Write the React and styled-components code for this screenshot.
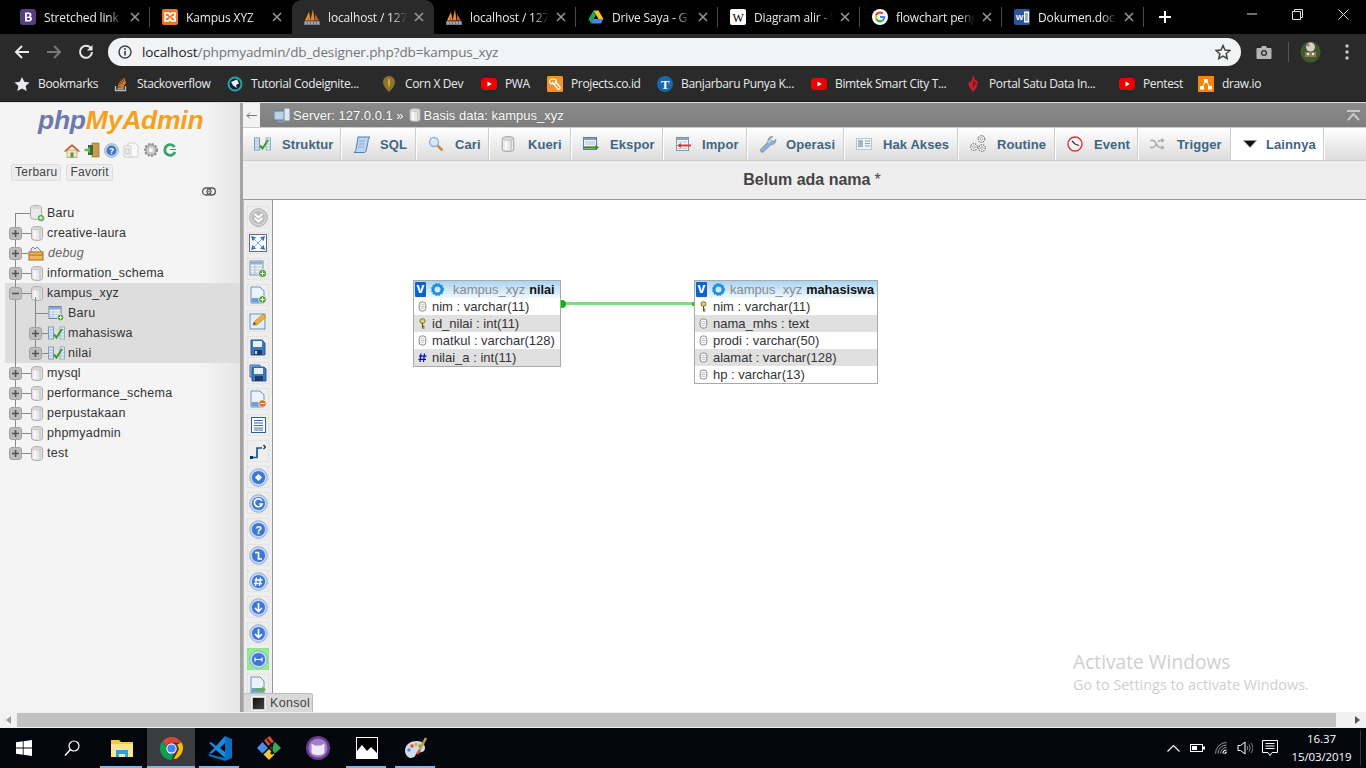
import React from 'react';
import styled, { createGlobalStyle } from 'styled-components';

const Global = createGlobalStyle`
  html, body { margin: 0; padding: 0; overflow: hidden; background: #fff; }
  * { box-sizing: border-box; }
  svg { display: block; flex: none; }
`;

const Screen = styled.div`
  width: 1366px; height: 768px; display: flex; flex-direction: column; overflow: hidden; position: relative;
  font-family: "Liberation Sans", Arial, sans-serif;
`;

/* ---------- browser chrome ---------- */
const TabStrip = styled.div`
  height: 34px; background: #000; display: flex; padding-left: 8px; flex: none;
`;
const Tab = styled.div`
  width: 142px; height: 34px; display: flex; align-items: center; padding-left: 12px; position: relative;
  color: #e8eaed; font: 12px "Open Sans", sans-serif; letter-spacing: -0.15px;
  background: ${p => (p.$active ? '#2a2a2a' : 'transparent')};
  border-radius: ${p => (p.$active ? '9px 9px 0 0' : '0')};
  ${p => (p.$sep ? `&::after { content: ""; position: absolute; right: 0; top: 7px; height: 20px; width: 1px; background: #4a4a4a; }` : '')}
`;
const TabLabel = styled.span`
  margin-left: 8px; width: 79px; white-space: nowrap;
  -webkit-mask-image: linear-gradient(to right, #000 80%, transparent 100%);
  mask-image: linear-gradient(to right, #000 80%, transparent 100%);
`;
const TabClose = styled.span`
  margin-left: 4px; width: 16px; display: flex; justify-content: center;
`;
const NewTab = styled.div`
  width: 42px; height: 34px; display: flex; align-items: center; justify-content: center;
`;
const WinControls = styled.div`
  margin-left: auto; display: flex;
`;
const WinBtn = styled.div`
  width: 45.5px; height: 28px; display: flex; align-items: center; justify-content: center;
`;
const Toolbar = styled.div`
  height: 33px; background: #2a2a2a; display: flex; align-items: center; padding: 3px 0 0 6px; flex: none;
`;
const NavBtn = styled.div`
  width: 32px; height: 28px; display: flex; align-items: center; justify-content: center;
`;
const Omnibox = styled.div`
  margin-left: 6px; width: 1133px; height: 28px; border-radius: 14px; background: #f1f3f4;
  display: flex; align-items: center; padding: 0 10px 0 10px;
`;
const UrlText = styled.div`
  margin-left: 10px; font: 13.5px "Open Sans", sans-serif; color: #70757a; white-space: nowrap; letter-spacing: -0.11px;
  b { font-weight: 400; color: #202124; }
`;
const StarWrap = styled.div`
  margin-left: auto;  margin-right: 0; display: flex;
`;
const ToolExtras = styled.div`
  display: flex; align-items: center; margin-left: 15px;
`;
const ToolSep = styled.div`
  width: 1px; height: 20px; background: #555; margin: 0 11px 0 16px;
`;
const BookmarkBar = styled.div`
  height: 35px; background: #2a2a2a; display: flex; align-items: center; padding: 0 0 1px 14px; flex: none;
  border-bottom: 1px solid #1b1b1b;
`;
const Bookmark = styled.div`
  width: ${p => p.$w}px; display: flex; align-items: center; gap: 8px; color: #e8eaed;
  font: 12px "Open Sans", sans-serif; white-space: nowrap; letter-spacing: -0.35px;
`;

/* ---------- phpMyAdmin layout ---------- */
const Page = styled.div`
  flex: none; height: 610px; display: flex; background: #fff; border-top: 1px solid #ddd;
`;
const Sidebar = styled.aside`
  width: 243px; flex: none; border-right: 3px solid #a3a3a3;
  background: linear-gradient(to right, #f4f4f4 0, #f4f4f4 205px, #e6e6e6 240px);
  display: flex; flex-direction: column;
`;
const Logo = styled.div`
  height: 35px; padding-left: 38px; display: flex; align-items: center;
  font: italic 700 26.5px "Liberation Sans", Arial, sans-serif; letter-spacing: -0.25px; color: #6d78ad;
  span { color: #f4a11d; }
`;
const NavIcons = styled.div`
  height: 22px; margin-top: 1px; padding-left: 64px; display: flex; align-items: center; gap: 4px;
`;
const SideBtns = styled.div`
  display: flex; gap: 5px; padding-left: 11px; margin-top: 3px;
`;
const SideBtn = styled.div`
  height: 17px; padding: 0 3px; border: 1px solid #ddd; border-radius: 3px; background: #eee; color: #444;
  font-size: 12px; line-height: 15px; letter-spacing: .25px;
`;
const LinkRow = styled.div`
  height: 20px; display: flex; align-items: center; padding-left: 202px;
`;
const Tree = styled.div`
  margin-top: 2px; position: relative;
  &::after { content: ""; position: absolute; left: 15px; top: 10px; bottom: 10px; width: 1px; background: #888; }
`;
const Branch = styled.div`
  position: relative;
  &::after { content: ""; position: absolute; left: 35px; top: 14px; bottom: 10px; width: 1px; background: #888; }
`;
const Row = styled.div`
  height: 20px; display: flex; align-items: center; position: relative;
  margin-left: 5px; padding-left: ${p => 4 + p.$depth * 20}px;
  background: ${p => (p.$hl ? '#dddddd' : 'transparent')};
  font-size: 12.5px; letter-spacing: .25px; color: ${p => (p.$muted ? '#666' : '#333')};
  font-style: ${p => (p.$muted ? 'italic' : 'normal')};
`;
const Expander = styled.span`
  width: 13px; height: 13px; border-radius: 3px; background: #bdbdbd; border: 1px solid #a2a2a2;
  display: flex; align-items: center; justify-content: center; position: relative; z-index: 1; flex: none;
`;
const Connector = styled.span`
  display: block; height: 1px; width: ${p => p.$w}px; background: #888; flex: none;
  margin-left: ${p => p.$ml || 0}px;
`;
const RowLabel = styled.span`
  margin-left: ${p => p.$ml}px; white-space: nowrap;
`;

const Main = styled.main`
  flex: 1; min-width: 0; display: flex; flex-direction: column;
`;
const ServerBar = styled.div`
  height: 25px; background: linear-gradient(to bottom, #8a8a8a, #7e7e7e); display: flex; align-items: center; flex: none;
  color: #fff; font-size: 13px; border-bottom: 1px solid #ccc;
`;
const BackBox = styled.div`
  width: 17px; height: 24px; background: #f3f3f3; display: flex; align-items: center; justify-content: center; flex: none;
`;
const Crumb = styled.div`
  display: flex; align-items: center; gap: 3px; margin-left: ${p => p.$ml}px; white-space: nowrap; text-shadow: 0 0 1px #555;
`;
const Collapse = styled.div`
  margin-left: auto; margin-right: 6px;
`;
const TabBar = styled.nav`
  height: 33px; display: flex; flex: none; background: linear-gradient(to bottom, #fff, #dcdcdc); border-bottom: 1px solid #ccc;
`;
const MenuTab = styled.div`
  width: ${p => p.$w}px; flex: none; display: flex; align-items: center; padding-left: 11px;
  font-weight: 700; font-size: 13px; color: #3f6584; letter-spacing: .1px;
  border-right: 1px solid #fff; box-shadow: inset -1px 0 0 #cfcfcf;
  background: ${p => (p.$on ? '#fff' : 'transparent')};
`;
const MenuLabel = styled.span`
  margin-left: ${p => p.$ml}px; white-space: nowrap;
`;
const Title = styled.div`
  height: 39px; background: #eee; border-bottom: 1px solid #999; flex: none;
  display: flex; align-items: center; justify-content: center; padding-left: 15px;
  font-size: 16px; font-weight: 700; color: #444;
  span { font-weight: 400; margin-left: 4px; }
`;
const Workspace = styled.div`
  flex: 1; min-height: 0; display: flex; position: relative; overflow: hidden;
`;
const SideTools = styled.div`
  width: 30px; flex: none; background: #eee; border-right: 1px solid #999; border-left: 1px solid #bbb;
  display: flex; flex-direction: column; align-items: center; padding-top: 6px; overflow: hidden;
`;
const ToolSlot = styled.div`
  width: 22px; height: 22px; margin-bottom: 4px; flex: none; display: flex; align-items: center; justify-content: center;
  border: 1px dotted ${p => (p.$on ? '#8fd88f' : '#dadada')};
  background: ${p => (p.$on ? '#8df08d' : 'transparent')};
`;
const Canvas = styled.div`
  flex: 1; position: relative; background: #fff;
`;
const DbTable = styled.div`
  position: absolute; left: ${p => p.$x}px; top: ${p => p.$y}px; width: ${p => p.$w}px;
  border: 1px solid #aaa; background: #fff; font-size: 13px; color: #333;
`;
const DbHead = styled.div`
  height: 17px; display: flex; align-items: center; padding-left: 1px; white-space: nowrap;
  background: linear-gradient(to bottom, #a9d5f3, #f0f8fd); color: #8a8a8a; font-size: 13px;
  b { color: #111; margin-left: 4px; font-size: 12.7px; }
`;
const VBox = styled.span`
  width: 11px; height: 15px; background: #0b62d0; color: #fff; font: 700 14px/13px "Liberation Sans", sans-serif; text-align: center; flex: none; border-radius: 1px;
`;
const HeadName = styled.span`
  margin-left: ${p => p.$ml}px;
`;
const DbRow = styled.div`
  height: 17px; display: flex; align-items: center; padding-left: 4px; white-space: nowrap; gap: 5px;
  background: ${p => (p.$alt ? '#e0e0e0' : '#fff')};
`;
const RelationLine = styled.div`
  position: absolute; left: ${p => p.$x}px; top: ${p => p.$y}px; width: ${p => p.$w}px; height: 3px; background: #7fdc7f;
`;
const RelationDot = styled.div`
  position: absolute; left: ${p => p.$x}px; top: ${p => p.$y}px; width: 7px; height: 8px; border-radius: 0 4px 4px 0; background: #0fb30f;
`;
const RelationEnd = styled.div`
  position: absolute; left: ${p => p.$x}px; top: ${p => p.$y}px; width: 2px; height: 4px; background: #35bd35;
`;
const Konsol = styled.div`
  position: absolute; left: 0; bottom: 0; height: 19px; width: 70px; background: #d9d9d9; border: 1px solid #bbb; border-bottom: none;
  border-radius: 3px 3px 0 0; display: flex; align-items: center; gap: 5px; padding-left: 8px; font-size: 12.5px; color: #444; letter-spacing: .3px;
`;
const KonsolIcon = styled.span`
  width: 13px; height: 13px; border: 1px solid #ccc; background: linear-gradient(135deg, #111, #444); outline: 1px solid #eee;
`;

/* ---------- bottom ---------- */
const HScroll = styled.div`
  height: 16px; background: #f1f1f1; display: flex; align-items: center; flex: none; padding-bottom: 1px;
`;
const ScrollArrow = styled.div`
  width: 17px; display: flex; justify-content: center;
`;
const ScrollThumb = styled.div`
  flex: 1; height: 14px; background: #c1c1c1; margin-right: 13px;
`;
const ScrollEnd = styled.div`
  width: 17px; margin-left: auto; display: flex; justify-content: center;
`;
const Taskbar = styled.footer`
  height: 40px; background: #03060c; display: flex; align-items: center; flex: none; position: relative; color: #fff;
`;
const TaskIcon = styled.div`
  width: ${p => p.$w || 49}px; height: 40px; display: flex; align-items: center; justify-content: center; flex: none; position: relative;
  background: ${p => (p.$on ? '#3a3c40' : 'transparent')};
  ${p => (p.$open ? `&::after { content: ""; position: absolute; left: ${p.$on ? 0 : 4}px; right: ${p.$on ? 0 : 5}px; bottom: 0; height: 2px; background: #76b9ed; }` : '')}
`;
const Tray = styled.div`
  margin-left: auto; display: flex; align-items: center; height: 40px; padding-right: 5px;
`;
const TrayIcon = styled.div`
  width: ${p => p.$w}px; display: flex; justify-content: center;
`;
const Clock = styled.div`
  width: 78px; text-align: center; font: 11.5px/18px "Open Sans", sans-serif;
  border-right: 1px solid #333; letter-spacing: -0.1px;
`;
const Watermark = styled.div`
  position: absolute; left: 1073px; top: 649px; color: #cfcfcf; font-family: "Open Sans", sans-serif; pointer-events: none;
`;
const WmBig = styled.div`
  font-size: 19.2px; line-height: 26px;
`;
const WmSmall = styled.div`
  font-size: 14.4px; line-height: 20px; margin-top: 0px;
`;

/* ---------- icons: browser ---------- */
const X = ({ c = '#9a9a9a' }) => (
  <svg width="10" height="10" viewBox="0 0 10 10"><path d="M1 1l8 8M9 1l-8 8" stroke={c} strokeWidth="1.5" /></svg>
);
const FavB = () => (
  <svg width="16" height="16" viewBox="0 0 16 16"><rect width="16" height="16" rx="3" fill="#563d7c" /><path d="M5 3.500h3.600c1.800 0 2.900.9 2.900 2.200 0 1-.6 1.700-1.400 1.900 1.100.2 1.900 1 1.900 2.200 0 1.600-1.200 2.700-3.200 2.700H5zM6.900 5v2.700h1.300c1 0 1.400-.5 1.400-1.400S9.100 5 8.200 5zm0 4.100V11h1.600c1 0 1.500-.4 1.500-1s-.6-1-1.600-1z" fill="#fff" /></svg>
);
const FavX = () => (
  <svg width="16" height="16" viewBox="0 0 16 16"><rect width="16" height="16" rx="2" fill="#e8762b" /><path d="M3 4h3.500l1.500 2 1.500-2H13v3l-2 1 2 1v3H9.500L8 10l-1.500 2H3V9l2-1-2-1z" fill="none" stroke="#fff" strokeWidth="1.700" /></svg>
);
const FavPma = () => (
  <svg width="16" height="16" viewBox="0 0 16 16"><path d="M1 11.500L5 3l1.500 8.500z" fill="#f29a2e" /><path d="M6.500 11.500L9 0l1.500 11.500z" fill="#ea8a1f" /><path d="M11 11.500V5l4 6.500z" fill="#c8641a" /><path d="M3.500 11.500L5 7v4.500z" fill="#a8561a" /><rect x="0" y="12" width="16" height="4" fill="#6d7084" /><path d="M1 13.300h14M1 14.800h14" stroke="#d5d6e0" strokeWidth=".7" strokeDasharray="2 1" /></svg>
);
const FavDrive = () => (
  <svg width="16" height="16" viewBox="0 0 16 16"><path d="M5.500 1.500h5l5 8.500h-5z" fill="#f7c325" /><path d="M5.500 1.500L.5 10l2.500 4.500 5-8.500z" fill="#1da462" /><path d="M3 14.500h10l2.500-4.500H5.500z" fill="#4285f4" /></svg>
);
const FavWiki = () => (
  <svg width="16" height="16" viewBox="0 0 16 16"><rect width="16" height="16" rx="2" fill="#fff" /><text x="8" y="12.500" fontSize="12" fontFamily="Liberation Serif" textAnchor="middle" fill="#000">W</text></svg>
);
const FavG = () => (
  <svg width="16" height="16" viewBox="0 0 16 16"><circle cx="8" cy="8" r="8" fill="#fff" /><path d="M13.200 8.100c0-.4 0-.8-.1-1.100H8v2.100h2.900c-.1.700-.5 1.300-1.100 1.700l1.700 1.300c1-.9 1.700-2.300 1.700-4z" fill="#4285f4" /><path d="M8 13.400c1.500 0 2.700-.5 3.500-1.300l-1.700-1.300c-.5.3-1.100.5-1.800.5-1.400 0-2.600-.9-3-2.200L3.200 10C4.100 12 5.900 13.400 8 13.400z" fill="#34a853" /><path d="M5 9.100c-.2-.7-.2-1.500 0-2.200L3.200 5.500c-.7 1.500-.7 3.200 0 4.600z" fill="#fbbc05" /><path d="M8 4.600c.8 0 1.500.3 2 .8l1.500-1.500C10.600 3 9.400 2.600 8 2.600c-2.100 0-3.900 1.300-4.800 2.900L5 6.900c.4-1.300 1.600-2.300 3-2.300z" fill="#ea4335" /></svg>
);
const FavWord = () => (
  <svg width="16" height="16" viewBox="0 0 16 16"><rect width="16" height="16" rx="2" fill="#2b579a" /><rect x="10" y="2.500" width="5" height="11" fill="#fff" /><path d="M11 5h3M11 7h3M11 9h3M11 11h3" stroke="#2b579a" /><text x="5.500" y="11" fontSize="8" fontWeight="700" fontFamily="Liberation Sans" textAnchor="middle" fill="#fff">W</text></svg>
);
const Arrow = ({ c = '#e8eaed', flip }) => (
  <svg width="16" height="16" viewBox="0 0 16 16" style={flip ? { transform: 'scaleX(-1)' } : undefined}><path d="M15 8H2M8 2L2 8l6 6" fill="none" stroke={c} strokeWidth="2" /></svg>
);
const Reload = () => (
  <svg width="16" height="16" viewBox="0 0 16 16"><path d="M13 4.500A6 6 0 1 0 14 8" fill="none" stroke="#e8eaed" strokeWidth="2" /><path d="M14.500 1v5.500H9z" fill="#e8eaed" /></svg>
);
const Info = () => (
  <svg width="14" height="14" viewBox="0 0 14 14"><circle cx="7" cy="7" r="6" fill="none" stroke="#444" strokeWidth="1.500" /><path d="M7 6v4.500" stroke="#444" strokeWidth="1.700" /><circle cx="7" cy="4" r="1" fill="#444" /></svg>
);
const StarO = () => (
  <svg width="16" height="16" viewBox="0 0 16 16"><path d="M8 1.500l2 4.500 4.800.5-3.600 3.200 1 4.800L8 12l-4.200 2.500 1-4.800L1.200 6.500 6 6z" fill="none" stroke="#444" strokeWidth="1.500" /></svg>
);
const Camera = () => (
  <svg width="16" height="14" viewBox="0 0 16 14"><path d="M1.500 3H5l1-2h4l1 2h3.500a1 1 0 0 1 1 1v9a1 1 0 0 1-1 1h-13a1 1 0 0 1-1-1V4a1 1 0 0 1 1-1z" fill="#b5b5b5" /><circle cx="8" cy="8" r="3" fill="#2a2a2a" /><circle cx="8" cy="8" r="1.700" fill="#b5b5b5" /></svg>
);
const Avatar = () => (
  <svg width="21" height="22" viewBox="0 0 21 22"><ellipse cx="10.500" cy="11" rx="10" ry="10.500" fill="#3d5a2a" /><circle cx="10.500" cy="6" r="4.500" fill="#d8d0c8" /><circle cx="8" cy="4" r="1.500" fill="#b06a70" /><path d="M5 11h11v5H5z" fill="#8c7a5c" /><circle cx="8" cy="13" r="1.200" fill="#eee" /><circle cx="13" cy="13" r="1.200" fill="#eee" /></svg>
);
const Dots = () => (
  <svg width="4" height="16" viewBox="0 0 4 16"><circle cx="2" cy="2" r="1.700" fill="#ccc" /><circle cx="2" cy="8" r="1.700" fill="#ccc" /><circle cx="2" cy="14" r="1.700" fill="#ccc" /></svg>
);
const BmStar = () => (
  <svg width="16" height="16" viewBox="0 0 16 16"><path d="M8 1l2.200 4.800 5.300.6-3.900 3.500 1.100 5.100L8 12.400 3.300 15l1.100-5.100L.5 6.400l5.300-.6z" fill="#e8eaed" /></svg>
);
const BmSo = () => (
  <svg width="16" height="16" viewBox="0 0 16 16"><path d="M2.500 10v4.500h10V10" fill="none" stroke="#bcbbbb" strokeWidth="1.300" /><path d="M4.500 12.800h6" stroke="#bcbbbb" strokeWidth="1.200" /><path d="M4.700 10.900l6 .6M5 9l5.800 1.400M5.800 7l5.200 2.700M7 5.200l4.500 3.700M8.700 3.500l3.300 4.600M10.700 2l1.800 5.300" stroke="#f48024" strokeWidth="1.100" /></svg>
);
const BmTeal = () => (
  <svg width="16" height="16" viewBox="0 0 16 16"><circle cx="8" cy="8" r="7.500" fill="#25a5a5" /><circle cx="8" cy="8" r="5.500" fill="#123" /><path d="M4 6l6-2.500 2 4-3 1.500 1 3-4-2.500z" fill="#e8f4f4" /></svg>
);
const BmCorn = () => (
  <svg width="16" height="18" viewBox="0 0 16 18"><path d="M8 17C4 13 2 10 2 7a6 6 0 0 1 12 0c0 3-2 6-6 10z" fill="#8b7330" /><path d="M8 3c-1.500 2-1.500 6 0 10 1.500-4 1.500-8 0-10z" fill="#e0a92e" /></svg>
);
const BmYt = () => (
  <svg width="16" height="16" viewBox="0 0 16 16"><rect y="2" width="16" height="12" rx="3.500" fill="#f00000" /><path d="M6.500 5.500L10.800 8l-4.300 2.500z" fill="#fff" /></svg>
);
const BmProj = () => (
  <svg width="16" height="16" viewBox="0 0 16 16"><rect width="16" height="16" rx="1.500" fill="#f0932b" /><ellipse cx="6" cy="5.500" rx="3.500" ry="2.500" fill="none" stroke="#fff" strokeWidth="1.200" /><path d="M5 6l6 7c1 1 3-1 2-2L8 5" fill="none" stroke="#fff" strokeWidth="1.200" /></svg>
);
const BmT = () => (
  <svg width="16" height="16" viewBox="0 0 16 16"><circle cx="8" cy="8" r="8" fill="#1769aa" /><text x="8" y="12.500" fontSize="12.500" fontFamily="Liberation Serif" fontWeight="700" textAnchor="middle" fill="#fff">T</text></svg>
);
const BmGem = () => (
  <svg width="16" height="18" viewBox="0 0 16 18"><path d="M8 0l2 4.500 3 2-1.500 6L8 17 4.500 12.500 3 8l3.500-2z" fill="#c4202c" /><path d="M8 5l3 3-3 5z" fill="#86101a" /></svg>
);
const BmDraw = () => (
  <svg width="16" height="16" viewBox="0 0 16 16"><rect width="16" height="16" fill="#f08705" /><path d="M8 5L4 11M8 5l4 6" stroke="#fff" /><rect x="6" y="3" width="4" height="3.500" fill="#fff" /><rect x="2" y="10" width="4" height="3.500" fill="#fff" /><rect x="10" y="10" width="4" height="3.500" fill="#fff" /></svg>
);

/* ---------- icons: phpMyAdmin ---------- */
const DbIcon = ({ w = 12, h = 15, c = '#e9e9e9' }) => (
  <svg width={w} height={h} viewBox="0 0 12 15"><path d="M.6 2.500C.6 1.300 3 .6 6 .6s5.400.7 5.400 1.900v10c0 1.200-2.400 1.900-5.400 1.900S.6 13.700.6 12.500z" fill={c} stroke="#a8a8a8" /><path d="M4 3.500v9.500" stroke="#fff" strokeWidth="1.500" /><path d="M9 3.500v9.500" stroke="#c8c8c8" strokeWidth="1.500" /><ellipse cx="6" cy="2.500" rx="5" ry="1.500" fill="#dcdcdc" stroke="#b8b8b8" strokeWidth=".6" /></svg>
);
const DbPlus = () => (
  <svg width="15" height="17" viewBox="0 0 15 17"><path d="M.6 2.500C.6 1.300 3 .6 6 .6s5.400.7 5.400 1.900v10c0 1.200-2.400 1.900-5.400 1.900S.6 13.700.6 12.500z" fill="#e9e9e9" stroke="#a8a8a8" /><ellipse cx="6" cy="2.500" rx="5" ry="1.500" fill="#d8d8d8" /><circle cx="11" cy="13" r="3.500" fill="#4f9f3c" stroke="#fff" strokeWidth=".6" /><path d="M9 13h4M11 11v4" stroke="#fff" /></svg>
);
const PlusMark = ({ minus }) => (
  <svg width="9" height="9" viewBox="0 0 9 9"><path d={minus ? 'M1 4.500h7' : 'M1 4.500h7M4.500 1v7'} stroke="#555" strokeWidth="1.600" /></svg>
);
const Grid = ({ children, w = 16, h = 16 }) => (
  <svg width={w} height={h} viewBox="0 0 16 16">
    <rect x="1" y="1.500" width="12" height="12" fill="#eef3f8" stroke="#5c87b2" />
    <rect x="1.500" y="2" width="11" height="2.500" fill="#84a9cf" />
    <path d="M2 7h10M2 9.500h10M2 12h10M5 5v8" stroke="#a9bed4" strokeWidth=".8" />
    {children}
  </svg>
);
const TableNew = () => (
  <Grid><circle cx="12.500" cy="12.500" r="3.300" fill="#4f9f3c" stroke="#fff" strokeWidth=".6" /><path d="M10.700 12.500h3.600M12.500 10.700v3.600" stroke="#fff" /></Grid>
);
const TableCheck = () => (
  <svg width="17" height="14" viewBox="0 0 17 14">
    <rect x=".5" y="1" width="5" height="12" fill="#dbe7f3" stroke="#7c9cbd" />
    <rect x="12" y="1" width="4.500" height="12" fill="#e4edf6" stroke="#93aec9" />
    <path d="M1 4h4M1 7h4M1 10h4M12.500 4h4M12.500 7h4M12.500 10h4" stroke="#8aa9c8" strokeWidth=".7" />
    <path d="M6 8.500l2.500 3L14 3" fill="none" stroke="#3f9a2e" strokeWidth="2" />
  </svg>
);
const TabSql = () => (
  <svg width="18" height="17" viewBox="0 0 18 17"><path d="M5 1h12c-1.500 1-2 3-2 5l-2 9c-.4 1.200-1 1.500-2 1.500H1c1.200-.6 1.600-1.500 2-3z" fill="#bfd5ee" stroke="#4a80ba" /><path d="M6 5h6M5.500 8h6M5 11h6" stroke="#7aa3d0" strokeWidth=".8" /></svg>
);
const TabSearch = () => (
  <svg width="16" height="16" viewBox="0 0 16 16"><path d="M9.500 9.500l5 5" stroke="#c78a4a" strokeWidth="2.500" /><circle cx="6" cy="6" r="4.500" fill="#d6e8f8" stroke="#8fb2d4" strokeWidth="1.300" /><path d="M3.500 5a3 3 0 0 1 2.500-2" stroke="#fff" fill="none" /></svg>
);
const TabExport = () => (
  <svg width="16" height="16" viewBox="0 0 16 16"><rect x=".5" y="1.500" width="13" height="12" fill="#eef3f8" stroke="#5c7f9f" /><rect x="1" y="2" width="12" height="2" fill="#7f9fbd" /><path d="M2 6h10M2 8h10" stroke="#9fb6cc" strokeWidth=".8" /><path d="M1 11.500h12" stroke="#3b8a2a" strokeWidth="2.200" /><path d="M12.500 9l3.500 2.500-3.500 2.500z" fill="#3b8a2a" /></svg>
);
const TabImport = () => (
  <svg width="16" height="16" viewBox="0 0 16 16"><rect x="1.500" y="1.500" width="12" height="13" fill="#f3f6fa" stroke="#7f97b0" /><rect x="2" y="2" width="11" height="2" fill="#8aa6c2" /><path d="M3 6h9M3 12.500h9" stroke="#a9bed4" strokeWidth=".8" /><path d="M5 9.500h11" stroke="#d83a3a" strokeWidth="2" /><path d="M6 7L2 9.500 6 12z" fill="#d83a3a" /></svg>
);
const TabWrench = () => (
  <svg width="18" height="18" viewBox="0 0 18 18"><path d="M1.500 14.500L9 6.800c-.6-2.300.8-5 3.900-5.300l.8.2-2 2.300 1.200 2 2.300.3 1.500-2c.6 3-1.500 5.600-4.700 5.400L4.300 17c-1.500 1-3.800-1-2.800-2.500z" fill="#8fb1d6" stroke="#6f7f90" strokeWidth=".7" /><path d="M9.500 7.500l4-4.500" stroke="#e4e8ee" strokeWidth="1.200" /></svg>
);
const TabCard = () => (
  <svg width="16" height="12" viewBox="0 0 16 12"><rect x=".5" y=".5" width="15" height="11" fill="#eef2f7" stroke="#b8c4d0" /><rect x="2" y="2" width="5" height="7" fill="#9dbde0" /><circle cx="4.500" cy="4.300" r="1.400" fill="#d9a173" /><path d="M2.500 9c0-2 4-2 4 0z" fill="#d9a173" /><path d="M9 3h5M9 5.500h5M9 8h5" stroke="#8fa0b0" /></svg>
);
const Gear = ({ x, y, r }) => (
  <g><circle cx={x} cy={y} r={r} fill="#fff" stroke="#777" strokeWidth="1.300" strokeDasharray="1.400 .9" /><circle cx={x} cy={y} r={r / 2.500} fill="#fff" stroke="#888" strokeWidth=".7" /></g>
);
const TabGears = () => (
  <svg width="17" height="18" viewBox="0 0 17 18"><Gear x={11.500} y={4} r={3.300} /><Gear x={4} y={12} r={3.300} /><Gear x={12} y={13} r={3.300} /></svg>
);
const TabEvent = () => (
  <svg width="16" height="16" viewBox="0 0 16 16"><circle cx="8" cy="8" r="7" fill="#f3f3f3" stroke="#d9363a" strokeWidth="1.400" /><path d="M8 8L5 5M8 8l4 1.500" stroke="#333" strokeWidth="1.300" /></svg>
);
const TabTrigger = () => (
  <svg width="15" height="12" viewBox="0 0 15 12"><path d="M0 2.500h3c3 0 4 7 7 7h2M0 9.500h3c1.500 0 2.300-1.500 3-3M8 4c.6-1 1.200-1.500 2-1.500h2" fill="none" stroke="#a6a6a6" strokeWidth="1.400" /><path d="M11.500 0l3 2.500-3 2.500zM11.500 7l3 2.500-3 2.500z" fill="#a6a6a6" /></svg>
);
const TabMore = () => (
  <svg width="14" height="8" viewBox="0 0 14 8"><path d="M.5.500h13L7 7.500z" fill="#111" stroke="#999" strokeWidth=".7" /></svg>
);
const Home = () => (
  <svg width="16" height="15" viewBox="0 0 16 15"><path d="M3 7h10v7.500H3z" fill="#efe3c8" stroke="#9a8a5a" strokeWidth=".6" /><path d="M0 8L8 1l8 7-1.500 1L8 3.500 1.500 9z" fill="#c66a28" /><rect x="6.500" y="9.500" width="3" height="5" fill="#5e9a3a" /></svg>
);
const Exit = () => (
  <svg width="16" height="16" viewBox="0 0 16 16"><rect x="8" y="1" width="7" height="14" fill="#c99b4a" stroke="#8a6a2a" strokeWidth=".6" /><path d="M4 3h5v10H4z" fill="#40643a" /><path d="M.5 8h5" stroke="#5fbf4a" strokeWidth="2.400" /><path d="M5 4.500L8.800 8 5 11.500z" fill="#5fbf4a" transform="rotate(180 5.500 8)" /></svg>
);
const Help = ({ s = 15 }) => (
  <svg width={s} height={s} viewBox="0 0 16 16"><circle cx="8" cy="8" r="7.300" fill="#c6d8ee" stroke="#8aa8cc" /><circle cx="8" cy="8" r="5.300" fill="#3f78b8" /><text x="8" y="11.300" fontSize="9" fontWeight="700" fontFamily="Liberation Sans" textAnchor="middle" fill="#fff">?</text></svg>
);
const Docs = () => (
  <svg width="16" height="16" viewBox="0 0 16 16"><path d="M5 1h7l3 3v11H5z" fill="#fafafa" stroke="#cfcfcf" /><path d="M1 4h7v11H1z" fill="#f4f4f4" stroke="#cfcfcf" /><rect x="3" y="7" width="3" height="5" fill="none" stroke="#c4c4c4" /></svg>
);
const Cog = () => (
  <svg width="16" height="16" viewBox="0 0 16 16"><circle cx="8" cy="8" r="5.800" fill="#aaa" stroke="#8c8c8c" strokeWidth="2.400" strokeDasharray="2 1.400" /><circle cx="8" cy="8" r="4.500" fill="#c8c8c8" /><circle cx="8" cy="8" r="2.200" fill="#f4f4f4" /></svg>
);
const Refresh = () => (
  <svg width="14" height="14" viewBox="0 0 14 14"><path d="M11.500 4A5.300 5.300 0 1 0 12 9" fill="none" stroke="#35a36b" strokeWidth="2.800" /><path d="M7 7h6v-1L7 6z" fill="#35a36b" /></svg>
);
const LinkIc = () => (
  <svg width="14" height="9" viewBox="0 0 14 9"><rect x=".7" y="1" width="8" height="7" rx="3.200" fill="none" stroke="#555" strokeWidth="1.300" /><rect x="5.300" y="1" width="8" height="7" rx="3.200" fill="none" stroke="#555" strokeWidth="1.300" /><path d="M4 4.500h6" stroke="#888" strokeWidth="1.500" /></svg>
);
const ServerIc = () => (
  <svg width="16" height="15" viewBox="0 0 16 15"><rect x="0" y="3" width="12" height="9" fill="#bcd0e6" stroke="#5578a0" /><rect x="10" y="0" width="6" height="13" fill="#dfe7f0" stroke="#7a8aa0" /><rect x="3" y="12.500" width="8" height="2" fill="#8a9ab0" /></svg>
);
const RowGlyph = () => (
  <svg width="9" height="11" viewBox="0 0 9 11"><rect x="1.200" y="1" width="6.600" height="9" rx="2.500" fill="#fff" stroke="#888" /><path d="M2.500 3.700h4M2.500 5.500h4M2.500 7.300h4" stroke="#aaa" strokeWidth=".7" /></svg>
);
const KeyGlyph = () => (
  <svg width="9" height="11" viewBox="0 0 9 11"><ellipse cx="4.500" cy="3" rx="2.600" ry="2.300" fill="#e8d266" stroke="#6e6a2a" strokeWidth=".9" /><path d="M4.500 5v5.500M4.500 8.300h2M4.500 10h2" stroke="#58571f" strokeWidth="1.100" /></svg>
);
const HashGlyph = () => (
  <svg width="9" height="11" viewBox="0 0 9 11"><path d="M3 1.500l-1 8.500M6.500 1.500l-1 8.500M1 4.200h7.500M.5 7.300h7.500" stroke="#0a0ac0" strokeWidth="1.200" /></svg>
);
const BlueGear = () => (
  <svg width="13" height="13" viewBox="0 0 13 13"><circle cx="6.500" cy="6.500" r="4.400" fill="none" stroke="#1f8fdb" strokeWidth="2.800" /><circle cx="6.500" cy="6.500" r="5.700" fill="none" stroke="#1f8fdb" strokeWidth="1.400" strokeDasharray="1.800 1.200" /></svg>
);

const Orb = ({ children, grey }) => (
  <svg width="19" height="19" viewBox="0 0 19 19">
    <circle cx="9.500" cy="9.500" r="8.800" fill={grey ? '#d4d4d4' : '#c4d8f0'} stroke={grey ? '#aaa' : '#8fadd8'} />
    <circle cx="9.500" cy="9.500" r="6.600" fill={grey ? '#bbb' : '#3f78d4'} />
    {children}
  </svg>
);
const W = { fill: 'none', stroke: '#fff', strokeWidth: 1.700 };
const sideTools = [
  <Orb grey><path d="M5.500 6l4 3.500 4-3.500M5.500 10l4 3.500 4-3.500" {...W} /></Orb>,
  <svg width="18" height="18" viewBox="0 0 18 18"><rect x=".5" y=".5" width="17" height="17" fill="#f8fbff" stroke="#667" /><path d="M2 2l5 1.500L3.500 7zM16 2l-1.500 5L11 3.500zM2 16l1.500-5L7 14.500zM16 16l-5-1.500 3.500-3.500z" fill="#2f6a9f" /><path d="M4 4l10 10M14 4L4 14" stroke="#8ab0d0" /></svg>,
  <svg width="18" height="18" viewBox="0 0 18 18"><rect x="1" y="1" width="13" height="14" fill="#eef3f8" stroke="#7594b4" /><rect x="1.500" y="1.500" width="12" height="3" fill="#8fb0d2" /><path d="M2 7h11M2 10h11M2 13h11M6 5v9" stroke="#a9bed4" strokeWidth=".8" /><circle cx="13.500" cy="13.500" r="4" fill="#4f9f3c" stroke="#fff" strokeWidth=".7" /><path d="M11.300 13.500h4.400M13.500 11.300v4.400" stroke="#fff" /></svg>,
  <svg width="18" height="18" viewBox="0 0 18 18"><path d="M2 1h9l4 4v12H2z" fill="#eaf3fb" stroke="#6d93bb" /><path d="M2.500 12h12v4.500h-12z" fill="#6aa1d6" /><circle cx="13.500" cy="13.500" r="3.800" fill="#4f9f3c" stroke="#fff" strokeWidth=".7" /><path d="M11.400 13.500h4.200M13.500 11.400v4.200" stroke="#fff" /></svg>,
  <svg width="18" height="18" viewBox="0 0 18 18"><rect x="1" y="2" width="15" height="15" fill="#e2eefa" stroke="#6d93bb" /><path d="M4 13l1-3 9-8 3 3-9 8z" fill="#eeb13a" stroke="#b07a20" strokeWidth=".6" /><path d="M4 13l1-3 2 2z" fill="#444" /></svg>,
  <svg width="16" height="17" viewBox="0 0 16 17"><path d="M1 1h11l3 3v12H1z" fill="#3d78bd" stroke="#2a5a94" /><rect x="3" y="2" width="9" height="6" fill="#e6eef7" /><rect x="4" y="11" width="8" height="5" fill="#1d3d66" /><rect x="5" y="12" width="2" height="3" fill="#dde" /></svg>,
  <svg width="18" height="19" viewBox="0 0 18 19"><path d="M1 1h10v12H1z" fill="#8ebae4" stroke="#3e6ea4" /><path d="M3 3h12l2 2v12H3z" fill="#3d78bd" stroke="#2a5a94" /><rect x="5" y="4" width="9" height="6" fill="#e6eef7" /><rect x="6" y="12" width="8" height="5" fill="#1d3d66" /></svg>,
  <svg width="18" height="18" viewBox="0 0 18 18"><path d="M2 1h9l4 4v12H2z" fill="#eaf3fb" stroke="#6d93bb" /><path d="M2.500 12h12v4.500h-12z" fill="#6aa1d6" /><circle cx="13.500" cy="13.500" r="3.800" fill="#df7028" stroke="#fff" strokeWidth=".7" /><path d="M11.400 13.500h4.200" stroke="#fff" /></svg>,
  <svg width="15" height="16" viewBox="0 0 15 16"><rect x=".5" y=".5" width="14" height="15" fill="#fff" stroke="#2f5f96" /><path d="M3 3.500h9M3 6h9M3 8.500h9M3 11h9M3 13h9" stroke="#3e6ea4" /></svg>,
  <svg width="16" height="15" viewBox="0 0 16 15"><path d="M1.500 13.500H7V4h5" fill="none" stroke="#2050a8" strokeWidth="1.700" /><rect y="12" width="3" height="3" fill="#102a80" /><path d="M13.500 1l2 2-2 2" fill="none" stroke="#223" strokeWidth="1.200" /></svg>,
  <Orb><path d="M9.500 6l3.500 3.500-3.500 3.500L6 9.500z" fill="#fff" /></Orb>,
  <Orb><path d="M13 7a4 4 0 1 0 .2 3h-3" {...W} /></Orb>,
  <Orb><text x="9.500" y="13.500" fontSize="11" fontWeight="700" fontFamily="Liberation Sans" textAnchor="middle" fill="#fff">?</text></Orb>,
  <Orb><path d="M6 6.500h3.500v6.500h3.500" {...W} /></Orb>,
  <Orb><path d="M7.500 5.500l-1 8.500M11.500 5.500l-1 8.500M5.500 8h8M5 11.500h8" fill="none" stroke="#fff" strokeWidth="1.300" /></Orb>,
  <Orb><path d="M9.500 5v8.500M6 10l3.500 3.500L13 10" {...W} /></Orb>,
  <Orb><path d="M9.500 5v8.500M6 10l3.500 3.500L13 10" {...W} /></Orb>,
  <Orb><path d="M5.500 9.500h8M6 7.500v4M13 7.500v4" fill="none" stroke="#fff" strokeWidth="1.200" /></Orb>,
  <svg width="18" height="18" viewBox="0 0 18 18"><path d="M2 1h9l4 4v12H2z" fill="#eaf3fb" stroke="#6d93bb" /><path d="M2.500 12h12v4.500h-12z" fill="#6aa1d6" /><path d="M6 13.500h8" stroke="#6bb04a" strokeWidth="2.500" /><path d="M13 10.500l4 3-4 3z" fill="#6bb04a" /></svg>,
];

/* ---------- icons: task bar ---------- */
const WinLogo = () => (
  <svg width="16" height="16" viewBox="0 0 16 16"><path d="M0 2.300L6.800 1.300v6.300H0zM7.600 1.200L16 0v7.600H7.600zM0 8.400h6.800v6.300L0 13.700zM7.600 8.400H16V16l-8.400-1.200z" fill="#fff" /></svg>
);
const Search = () => (
  <svg width="16" height="17" viewBox="0 0 16 17"><circle cx="10" cy="6" r="5" fill="none" stroke="#fff" strokeWidth="1.200" /><path d="M6.500 9.500L1 15.500" stroke="#fff" strokeWidth="1.500" /></svg>
);
const Explorer = () => (
  <svg width="22" height="19" viewBox="0 0 22 19"><path d="M0 1h8l2 2h12v15H0z" fill="#f2c94f" /><path d="M0 5h22v13H0z" fill="#fde58a" /><path d="M5 11h12v7h-3v-3H8v3H5z" fill="#2f9fd8" /></svg>
);
const Chrome = () => (
  <svg width="23" height="23" viewBox="0 0 24 24"><path d="M12 0a12 12 0 0 1 10.400 6H12a6 6 0 0 0-5.600 3.800L2.900 4.200A12 12 0 0 1 12 0z" fill="#db4437" /><path d="M22.400 6a12 12 0 0 1-8.300 17.800l4.400-7.800a6 6 0 0 0-.8-7.500z" fill="#fbbc05" transform="translate(0 -.5)" /><path d="M2.900 4.200l5 8.800A6 6 0 0 0 14 17.700l-2 6.300A12 12 0 0 1 2.900 4.200z" fill="#0f9d58" /><circle cx="12" cy="12" r="5.400" fill="#fff" /><circle cx="12" cy="12" r="4.300" fill="#4285f4" /></svg>
);
const VsCode = () => (
  <svg width="24" height="25" viewBox="0 0 24 25"><path d="M17 0l7 3v19l-7 3L1 20l-.5-2L17 22z" fill="#0a6fc2" /><path d="M17 0v22L8 14l-5 4-2-1 5.500-5L1 7l2-1 5 4z" fill="#1a8ae0" /><path d="M17 7l-5 5 5 4z" fill="#03060c" /></svg>
);
const GitIc = () => (
  <svg width="24" height="24" viewBox="0 0 24 24"><path d="M12 0l5 5-5 5-5-5z" fill="#d94a3d" transform="rotate(10 12 5)" /><path d="M5.500 6l5.500 6-5.500 5.500L0 12z" fill="#4e8be8" /><path d="M18 6l6 6-6 5.500L13 12z" fill="#3da55c" /><path d="M12 13l5.500 5.500L12 24l-5.500-5.500z" fill="#f2c63c" /><path d="M10 3l5 5.500v9" fill="none" stroke="#111" strokeWidth="1.300" /><circle cx="15" cy="9" r="1.600" fill="#111" /><circle cx="15" cy="17" r="1.600" fill="#111" /></svg>
);
const Kraken = () => (
  <svg width="24" height="24" viewBox="0 0 24 24"><circle cx="12" cy="12" r="12" fill="#6b3a90" /><circle cx="12" cy="12" r="9.500" fill="#a27ec4" /><path d="M5.500 7.500l3.500 2h6l3.500-2v8c0 2.500-2 3.500-6.500 3.500s-6.500-1-6.500-3.500z" fill="#efe9f5" /></svg>
);
const Photos = () => (
  <svg width="22" height="22" viewBox="0 0 22 22"><rect x=".5" y=".5" width="21" height="21" fill="#000" stroke="#fff" /><path d="M1 21V14l5-6 5 6 4-4 6 6v5z" fill="#fff" /></svg>
);
const Paint = () => (
  <svg width="24" height="22" viewBox="0 0 24 22"><path d="M1 14C1 7 7 4 13 4c5 0 8 3 8 7 0 6-7 3-9 6-1 3-3 4-6 4-3-1-5-4-5-7z" fill="#cfdce8" /><circle cx="8" cy="9" r="1.700" fill="#d94a3d" /><circle cx="12" cy="7.500" r="1.700" fill="#e8a33a" /><circle cx="5" cy="13" r="1.700" fill="#4e8be8" /><circle cx="16" cy="9" r="1.700" fill="#5bb04a" /><path d="M15 14L22 1" stroke="#c89a4a" strokeWidth="2.500" /><path d="M13 17l3-4" stroke="#d94a3d" strokeWidth="2.500" /></svg>
);
const Caret = () => (
  <svg width="13" height="7" viewBox="0 0 13 7"><path d="M.5 6.500l6-6 6 6" fill="none" stroke="#fff" strokeWidth="1.100" /></svg>
);
const Battery = () => (
  <svg width="15" height="8" viewBox="0 0 15 8"><rect x=".5" y=".5" width="12" height="7" fill="none" stroke="#fff" /><rect x="2" y="2" width="5" height="4" fill="#fff" /><rect x="13" y="2.500" width="2" height="3" fill="#fff" /></svg>
);
const Wifi = () => (
  <svg width="13" height="12" viewBox="0 0 13 12"><path d="M.5 11.500A11 11 0 0 1 11.500.5M3 11.500a8.500 8.500 0 0 1 8.500-8.500M5.500 11.500a6 6 0 0 1 6-6" fill="none" stroke="#999" /><path d="M8 11.500a3.500 3.500 0 0 1 3.500-3.500M10 12a2 2 0 0 1 2-2" fill="none" stroke="#fff" strokeWidth="1.200" /></svg>
);
const Speaker = () => (
  <svg width="16" height="14" viewBox="0 0 16 14"><path d="M1 4.500h2.500L8 1v12L3.500 9.500H1z" fill="none" stroke="#fff" /><path d="M10 5a3 3 0 0 1 0 4M12 3.500a6 6 0 0 1 0 7M14 2a8 8 0 0 1 0 10" fill="none" stroke="#888" /></svg>
);
const Notes = () => (
  <svg width="16" height="16" viewBox="0 0 16 16"><path d="M.5.500h15v12H10l-2 3-2-3H.5zM3.500 3.500h9M3.500 6h9M3.500 8.500h9" fill="none" stroke="#fff" /></svg>
);

const tabs = [
  { icon: <FavB />, t: 'Stretched link -', sep: true },
  { icon: <FavX />, t: 'Kampus XYZ' },
  { icon: <FavPma />, t: 'localhost / 127', active: true },
  { icon: <FavPma />, t: 'localhost / 127', sep: true },
  { icon: <FavDrive />, t: 'Drive Saya - G', sep: true },
  { icon: <FavWiki />, t: 'Diagram alir - V', sep: true },
  { icon: <FavG />, t: 'flowchart peng', sep: true },
  { icon: <FavWord />, t: 'Dokumen.doc', sep: true },
];
const bookmarks = [
  [99, <BmStar />, 'Bookmarks'], [114, <BmSo />, 'Stackoverflow'], [154, <BmTeal />, 'Tutorial Codeignite...'],
  [100, <BmCorn />, 'Corn X Dev'], [66, <BmYt />, 'PWA'], [110, <BmProj />, 'Projects.co.id'],
  [154, <BmT />, 'Banjarbaru Punya K...'], [154, <BmYt />, 'Bimtek Smart City T...'], [154, <BmGem />, 'Portal Satu Data In...'],
  [79, <BmYt />, 'Pentest'], [70, <BmDraw />, 'draw.io'],
];
const menu = [
  [99, <TableCheck />, 'Struktur', 11], [75, <TabSql />, 'SQL', 9], [73, <TabSearch />, 'Cari', 11],
  [82, <DbIcon w={14} h={16} />, 'Kueri', 13], [92, <TabExport />, 'Ekspor', 11], [84, <TabImport />, 'Impor', 11],
  [97, <TabWrench />, 'Operasi', 9], [114, <TabCard />, 'Hak Akses', 11], [97, <TabGears />, 'Routine', 10],
  [83, <TabEvent />, 'Event', 11], [93, <TabTrigger />, 'Trigger', 12], [93, <TabMore />, 'Lainnya', 9, true],
];
const dbs2 = ['mysql', 'performance_schema', 'perpustakaan', 'phpmyadmin', 'test'];

const Chest = () => (
  <svg width="16" height="15" viewBox="0 0 16 15"><path d="M3 7V3l2-2 2 2 2-2 2 2 2 2v2z" fill="#e8e8e8" stroke="#7a5a9a" strokeWidth=".8" /><rect x="1" y="6" width="14" height="8" fill="#f0b95c" stroke="#a06a1a" /><path d="M1 9h14" stroke="#a06a1a" /></svg>
);

const DbRowItem = ({ name, muted }) => (
  <Row $depth={0} $muted={muted}>
    <Expander><PlusMark /></Expander>
    <Connector $w={muted ? 6 : 9} />
    {muted ? <Chest /> : <DbIcon />}
    <RowLabel $ml={4}>{name}</RowLabel>
  </Row>
);
const TableRow = ({ name }) => (
  <Row $depth={1} $hl>
    <Expander><PlusMark /></Expander>
    <Connector $w={6} />
    <TableCheck />
    <RowLabel $ml={3}>{name}</RowLabel>
  </Row>
);
const FieldGlyph = { r: <RowGlyph />, k: <KeyGlyph />, h: <HashGlyph /> };
const GearGap = styled.span`
  width: 5px; flex: none;
`;
const DesignerTable = ({ x, y, w, name, ml, fields }) => (
  <DbTable $x={x} $y={y} $w={w}>
    <DbHead>
      <VBox>v</VBox>
      <GearGap />
      <BlueGear />
      <HeadName $ml={ml}>kampus_xyz</HeadName>
      <b>{name}</b>
    </DbHead>
    {fields.map(([g, t], i) => (
      <DbRow key={t} $alt={i % 2 === 1}>{FieldGlyph[g]}<span>{t}</span></DbRow>
    ))}
  </DbTable>
);

const AvatarGap = styled.span`
  width: 24px; flex: none;
`;

export default function App() {
  return (
    <Screen>
      <Global />
      <TabStrip>
        {tabs.map((t, i) => (
          <Tab key={i} $active={t.active} $sep={t.sep}>
            {t.icon}
            <TabLabel>{t.t}</TabLabel>
            <TabClose><X /></TabClose>
          </Tab>
        ))}
        <NewTab>
          <svg width="14" height="14" viewBox="0 0 14 14"><path d="M7 1v12M1 7h12" stroke="#fff" strokeWidth="2" /></svg>
        </NewTab>
        <WinControls>
          <WinBtn><svg width="10" height="2" viewBox="0 0 10 2"><path d="M0 1h10" stroke="#ddd" /></svg></WinBtn>
          <WinBtn><svg width="11" height="11" viewBox="0 0 11 11"><path d="M.5 2.500h8v8h-8zM2.500 2.500v-2h8v8h-2" fill="none" stroke="#ddd" /></svg></WinBtn>
          <WinBtn><svg width="11" height="11" viewBox="0 0 11 11"><path d="M.5.500l10 10M10.500.500l-10 10" stroke="#ddd" /></svg></WinBtn>
        </WinControls>
      </TabStrip>

      <Toolbar>
        <NavBtn><Arrow /></NavBtn>
        <NavBtn><Arrow c="#777" flip /></NavBtn>
        <NavBtn><Reload /></NavBtn>
        <Omnibox>
          <Info />
          <UrlText><b>localhost</b>/phpmyadmin/db_designer.php?db=kampus_xyz</UrlText>
          <StarWrap><StarO /></StarWrap>
        </Omnibox>
        <ToolExtras>
          <Camera />
          <ToolSep />
          <Avatar />
          <AvatarGap />
          <Dots />
        </ToolExtras>
      </Toolbar>

      <BookmarkBar>
        {bookmarks.map(([w, ic, t]) => (
          <Bookmark key={t} $w={w}>{ic}<span>{t}</span></Bookmark>
        ))}
      </BookmarkBar>

      <Page>
        <Sidebar>
          <Logo>php<span>MyAdmin</span></Logo>
          <NavIcons>
            <Home /><Exit /><Help /><Docs /><Cog /><Refresh />
          </NavIcons>
          <SideBtns>
            <SideBtn>Terbaru</SideBtn>
            <SideBtn>Favorit</SideBtn>
          </SideBtns>
          <LinkRow><LinkIc /></LinkRow>
          <Tree>
            <Row $depth={0}>
              <Connector $w={15} $ml={6} />
              <DbPlus />
              <RowLabel $ml={2}>Baru</RowLabel>
            </Row>
            <DbRowItem name="creative-laura" />
            <DbRowItem name="debug" muted />
            <DbRowItem name="information_schema" />
            <Branch>
              <Row $depth={0} $hl>
                <Expander><PlusMark minus /></Expander>
                <Connector $w={9} />
                <DbIcon />
                <RowLabel $ml={4}>kampus_xyz</RowLabel>
              </Row>
              <Row $depth={1} $hl>
                <Connector $w={13} $ml={6} />
                <TableNew />
                <RowLabel $ml={4}>Baru</RowLabel>
              </Row>
              <TableRow name="mahasiswa" />
              <TableRow name="nilai" />
            </Branch>
            {dbs2.map(n => <DbRowItem key={n} name={n} />)}
          </Tree>
        </Sidebar>

        <Main>
          <ServerBar>
            <BackBox>
              <svg width="11" height="7" viewBox="0 0 11 7"><path d="M11 3.500H1M4 .5l-3 3 3 3" fill="none" stroke="#777" /></svg>
            </BackBox>
            <Crumb $ml={14}><ServerIc /><span>Server: 127.0.0.1 »</span></Crumb>
            <Crumb $ml={5}><DbIcon w={12} h={14} /><span>Basis data: kampus_xyz</span></Crumb>
            <Collapse>
              <svg width="13" height="11" viewBox="0 0 13 11"><path d="M0 1h13M1 10l5.500-6 5.500 6" fill="none" stroke="#c8c8c8" strokeWidth="2" /></svg>
            </Collapse>
          </ServerBar>
          <TabBar>
            {menu.map(([w, ic, t, ml, on]) => (
              <MenuTab key={t} $w={w} $on={on}>
                {ic}
                <MenuLabel $ml={ml}>{t}</MenuLabel>
              </MenuTab>
            ))}
          </TabBar>
          <Title>Belum ada nama<span>*</span></Title>
          <Workspace>
            <SideTools>
              {sideTools.map((ic, i) => (
                <ToolSlot key={i} $on={i === 17}>{ic}</ToolSlot>
              ))}
            </SideTools>
            <Canvas>
              <RelationLine $x={288} $y={102} $w={133} />
              <RelationDot $x={286} $y={100} />
              <RelationEnd $x={419} $y={102} />
              <DesignerTable x={140} y={80} w={148} name="nilai" ml={9} fields={[
                ['r', 'nim : varchar(11)'], ['k', 'id_nilai : int(11)'], ['r', 'matkul : varchar(128)'], ['h', 'nilai_a : int(11)'],
              ]} />
              <DesignerTable x={421} y={80} w={184} name="mahasiswa" ml={5} fields={[
                ['k', 'nim : varchar(11)'], ['r', 'nama_mhs : text'], ['r', 'prodi : varchar(50)'], ['r', 'alamat : varchar(128)'], ['r', 'hp : varchar(13)'],
              ]} />
            </Canvas>
            <Konsol><KonsolIcon />Konsol</Konsol>
          </Workspace>
        </Main>
      </Page>

      <HScroll>
        <ScrollArrow><svg width="5" height="8" viewBox="0 0 5 8"><path d="M5 0v8L0 4z" fill="#999" /></svg></ScrollArrow>
        <ScrollThumb />
        <ScrollEnd><svg width="5" height="8" viewBox="0 0 5 8"><path d="M0 0v8l5-4z" fill="#555" /></svg></ScrollEnd>
      </HScroll>

      <Taskbar>
        <TaskIcon $w={48}><WinLogo /></TaskIcon>
        <TaskIcon $w={48}><Search /></TaskIcon>
        <TaskIcon $w={51} $open><Explorer /></TaskIcon>
        <TaskIcon $w={48} $on $open><Chrome /></TaskIcon>
        <TaskIcon $open><VsCode /></TaskIcon>
        <TaskIcon><GitIc /></TaskIcon>
        <TaskIcon><Kraken /></TaskIcon>
        <TaskIcon $open><Photos /></TaskIcon>
        <TaskIcon $open><Paint /></TaskIcon>
        <Tray>
          <TrayIcon $w={24}><Caret /></TrayIcon>
          <TrayIcon $w={24}><Battery /></TrayIcon>
          <TrayIcon $w={24}><Wifi /></TrayIcon>
          <TrayIcon $w={24}><Speaker /></TrayIcon>
          <TrayIcon $w={26}><Notes /></TrayIcon>
          <Clock>16.37<br />15/03/2019</Clock>
        </Tray>
      </Taskbar>
      <Watermark>
        <WmBig>Activate Windows</WmBig>
        <WmSmall>Go to Settings to activate Windows.</WmSmall>
      </Watermark>
    </Screen>
  );
}
